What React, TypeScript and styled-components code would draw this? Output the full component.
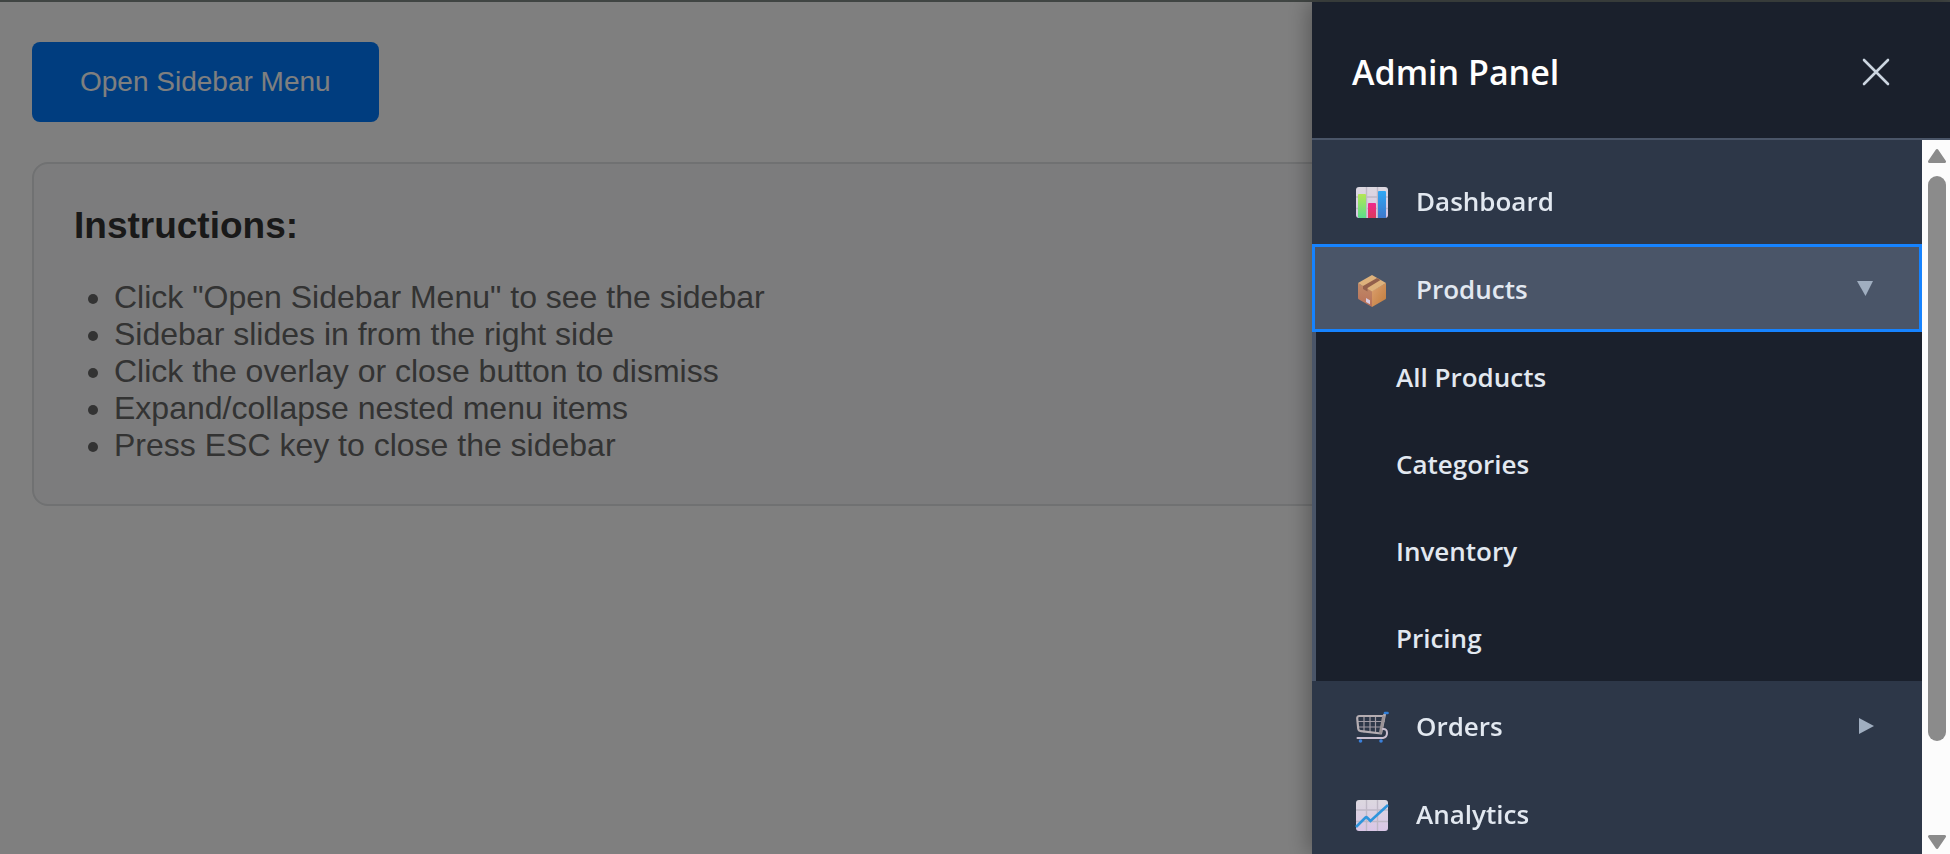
import React, { useEffect, useState } from "react";
import styled, { createGlobalStyle, css } from "styled-components";

const STRIP = 2;

const GlobalStyle = createGlobalStyle`
  *, *::before, *::after { box-sizing: border-box; }
  body {
    margin: 0;
    background: #ffffff;
    font-family: "Liberation Sans", Arial, sans-serif;
  }
`;

const TopStrip = styled.div`
  height: ${STRIP}px;
  background: #404543;
`;

const Page = styled.main`
  padding: 40px 32px;
`;

const OpenButton = styled.button`
  display: block;
  height: 80px;
  padding: 0 48px;
  border: 0;
  border-radius: 8px;
  background: #007bff;
  color: #ffffff;
  font-family: inherit;
  font-size: 28px;
  cursor: pointer;
`;

const Card = styled.section`
  margin-top: 40px;
  padding: 40px;
  border: 2px solid #e0e2e4;
  border-radius: 16px;
  background: #f8f9fa;
`;

const CardTitle = styled.h3`
  margin: 0 0 32px;
  color: #333333;
  font-size: 37px;
  line-height: 43px;
`;

const Steps = styled.ul`
  margin: 0;
  padding-left: 40px;
  color: #666666;
  font-size: 32px;
  line-height: 37px;
`;

const Overlay = styled.div`
  position: fixed;
  inset: ${STRIP}px 0 0;
  background: rgba(0, 0, 0, 0.5);
`;

const Sidebar = styled.aside`
  position: fixed;
  top: ${STRIP}px;
  right: 0;
  bottom: 0;
  display: flex;
  flex-direction: column;
  width: 638px;
  max-width: 100%;
  background: #2d3748;
  box-shadow: -4px 0 20px rgba(0, 0, 0, 0.3);
  font-family: "Open Sans", "Noto Sans", sans-serif;
`;

const SidebarHeader = styled.header`
  display: flex;
  align-items: center;
  justify-content: space-between;
  height: 138px;
  flex: none;
  padding: 0 40px;
  border-bottom: 2px solid #4a5568;
  background: #1a202c;
`;

const SidebarTitle = styled.h2`
  margin: 0;
  padding-top: 4px;
  color: #ffffff;
  font-size: 34px;
  font-weight: 600;
  line-height: 48px;
`;

const CloseButton = styled.button`
  display: grid;
  place-items: center;
  width: 68px;
  height: 72px;
  padding: 0;
  border: 0;
  background: none;
  color: #cbd5e0;
  cursor: pointer;
`;

const SidebarBody = styled.div`
  display: flex;
  flex: 1;
  min-height: 0;
`;

const Menu = styled.nav`
  flex: 1;
  min-width: 0;
  padding: 16px 0;
  overflow: hidden;
`;

const MenuList = styled.ul`
  margin: 0;
  padding: 0;
  list-style: none;
`;

const rowText = css`
  color: #e2e8f0;
  font-family: inherit;
  font-size: 26px;
  font-weight: 600;
  line-height: 36px;
  text-align: left;
`;

const MenuRow = styled.button<{ $active?: boolean }>`
  ${rowText}
  display: flex;
  align-items: center;
  gap: 24px;
  width: 100%;
  height: 88px;
  padding: 4px 40px 0;
  border: 0;
  background: ${(p) => (p.$active ? "#4a5568" : "transparent")};
  outline: ${(p) => (p.$active ? "3px solid #1683ff" : "none")};
  outline-offset: -3px;
  cursor: pointer;
`;

const RowLabel = styled.span`
  flex: 1;
  padding-bottom: 2px;
`;

const SubMenu = styled(MenuList)`
  padding-bottom: 1px;
  border-left: 4px solid #4a5568;
  background: #1a202c;
`;

const SubLink = styled.a`
  ${rowText}
  display: flex;
  align-items: center;
  height: 87px;
  padding: 2px 80px 0;
  text-decoration: none;
`;

const ScrollBar = styled.div`
  display: flex;
  flex-direction: column;
  width: 28px;
  padding: 0 4px 0 6px;
  background: #fcfcfc;
`;

const ScrollArrow = styled.svg`
  flex: none;
  width: 18px;
  height: 36px;
  fill: #8b8b8b;
  stroke: #8b8b8b;
  stroke-width: 3;
  stroke-linejoin: round;
`;

const ScrollTrack = styled.div`
  flex: 1;
`;

const ScrollThumb = styled.div`
  height: 88%;
  border-radius: 9px;
  background: #8b8b8b;
`;

const Icon = styled.svg`
  flex: none;
  width: 40px;
  height: 40px;
`;

const Arrow = styled.svg`
  flex: none;
  width: 26px;
  height: 24px;
  fill: #a0aec0;
`;

const ChartPaper = ({ id }: { id: string }) => (
  <>
    <defs>
      <linearGradient id={id} x1="0" y1="0" x2="0" y2="1">
        <stop offset="0" stopColor="#dcd8e0" />
        <stop offset="1" stopColor="#d9c6e6" />
      </linearGradient>
    </defs>
    <rect x="4" y="5" width="32" height="31" rx="3" fill={`url(#${id})`} />
    <path d="M14.5 5v31M25.5 5v31M4 15h32M4 26.5h32" stroke="#bfb8c6" strokeWidth="1.4" />
  </>
);

const BarsIcon = () => (
  <Icon viewBox="0 0 40 40" aria-hidden="true">
    <defs>
      <linearGradient id="green" x1="0" y1="0" x2="0" y2="1">
        <stop offset="0" stopColor="#b4e655" />
        <stop offset="1" stopColor="#5cdc8c" />
      </linearGradient>
      <linearGradient id="pink" x1="0" y1="0" x2="0" y2="1">
        <stop offset="0" stopColor="#f0288c" />
        <stop offset="1" stopColor="#d93a5c" />
      </linearGradient>
      <linearGradient id="blue" x1="0" y1="0" x2="0" y2="1">
        <stop offset="0" stopColor="#2fa8f5" />
        <stop offset="1" stopColor="#3f78cc" />
      </linearGradient>
    </defs>
    <ChartPaper id="paperBars" />
    <path d="M6 13a1 1 0 0 1 1-1h6a1 1 0 0 1 1 1v23H7l-1-1z" fill="url(#green)" />
    <path d="M16 22a1 1 0 0 1 1-1h6a1 1 0 0 1 1 1v14h-8z" fill="url(#pink)" />
    <path d="M26 10a1 1 0 0 1 1-1h6a1 1 0 0 1 1 1v26h-8z" fill="url(#blue)" />
  </Icon>
);

const BoxIcon = () => (
  <Icon viewBox="0 0 40 40" aria-hidden="true">
    <defs>
      <linearGradient id="boxLeft" x1="0" y1="0" x2="0" y2="1">
        <stop offset="0" stopColor="#c08a68" />
        <stop offset="1" stopColor="#b87058" />
      </linearGradient>
      <linearGradient id="boxRight" x1="0" y1="0" x2="1" y2="1">
        <stop offset="0" stopColor="#dca070" />
        <stop offset="1" stopColor="#c07c3c" />
      </linearGradient>
    </defs>
    <path d="M6 13l14 8v16L7 29.5q-1-.5-1-1.500z" fill="url(#boxLeft)" />
    <path d="M34 13l-14 8v16l13-7.500q1-.5 1-1.500z" fill="url(#boxRight)" />
    <path d="M20 5l14 8-14 8.500L6 13z" fill="#deb27c" />
    <path d="M25 8l3.500 2L15.500 18v3.500L11 19v-3z" fill="#93604c" />
    <path d="M14 28l4 2.300v4L14 32z" fill="#d9cbe0" />
  </Icon>
);

const CartIcon = () => (
  <Icon viewBox="0 0 40 40" aria-hidden="true" fill="none" strokeLinecap="round" strokeLinejoin="round">
    <path d="M12 9v16M18 9v16M23.5 9v16M6 14.500h26M6 20h24" stroke="#9f9aa3" strokeWidth="1.200" />
    <path d="M33 7l-1.500 2H7.500q-2.500 0-2.300 2.500l1 10q.3 2.500 2.800 2.700L29 26.500z" stroke="#b5adb2" strokeWidth="2.200" />
    <path d="M31.500 10L28.500 25.500" stroke="#9b9397" strokeWidth="3" />
    <path d="M31 22q4-.3 4 4t-4 5H5.500" stroke="#c9bfd0" strokeWidth="2" />
    <path d="M33 6h2.500" stroke="#2f7ed8" strokeWidth="2.600" />
    <circle cx="8.500" cy="34" r="1.800" fill="#3a7fd8" />
    <circle cx="29" cy="34" r="1.800" fill="#3a7fd8" />
  </Icon>
);

const TrendIcon = () => (
  <Icon viewBox="0 0 40 40" aria-hidden="true">
    <ChartPaper id="paperTrend" />
    <path d="M4 32L13.500 22.500q.8-.6 1.500 0L18.500 26 36 10" fill="none" stroke="#2f95dc" strokeWidth="2.600" />
  </Icon>
);

const DownArrow = () => (
  <Arrow viewBox="0 0 26 24" aria-hidden="true">
    <path d="M1 3h16L9.500 18z" />
  </Arrow>
);

const RightArrow = () => (
  <Arrow viewBox="0 0 26 24" aria-hidden="true">
    <path d="M3 3v16l15-8z" />
  </Arrow>
);

const steps = [
  'Click "Open Sidebar Menu" to see the sidebar',
  "Sidebar slides in from the right side",
  "Click the overlay or close button to dismiss",
  "Expand/collapse nested menu items",
  "Press ESC key to close the sidebar",
];

const productLinks = ["All Products", "Categories", "Inventory", "Pricing"];

export default function App() {
  const [open, setOpen] = useState(true);
  const [expanded, setExpanded] = useState(true);

  useEffect(() => {
    const onKey = (e: KeyboardEvent) => {
      if (e.key === "Escape") setOpen(false);
    };
    window.addEventListener("keydown", onKey);
    return () => window.removeEventListener("keydown", onKey);
  }, []);

  return (
    <>
      <GlobalStyle />
      <TopStrip />
      <Page>
        <OpenButton type="button" onClick={() => setOpen(true)}>
          Open Sidebar Menu
        </OpenButton>
        <Card>
          <CardTitle>Instructions:</CardTitle>
          <Steps>
            {steps.map((step) => (
              <li key={step}>{step}</li>
            ))}
          </Steps>
        </Card>
      </Page>
      {open && (
        <>
          <Overlay onClick={() => setOpen(false)} />
          <Sidebar aria-label="Admin Panel">
            <SidebarHeader>
              <SidebarTitle>Admin Panel</SidebarTitle>
              <CloseButton type="button" aria-label="Close" onClick={() => setOpen(false)}>
                <svg width="32" height="32" viewBox="0 0 32 32" aria-hidden="true">
                  <path d="M4 6l24 24M28 6L4 30" stroke="currentColor" strokeWidth="2.600" strokeLinecap="round" />
                </svg>
              </CloseButton>
            </SidebarHeader>
            <SidebarBody>
              <Menu>
                <MenuList>
                  <li>
                    <MenuRow type="button">
                      <BarsIcon />
                      <RowLabel>Dashboard</RowLabel>
                    </MenuRow>
                  </li>
                  <li>
                    <MenuRow
                      type="button"
                      $active
                      aria-expanded={expanded}
                      onClick={() => setExpanded(!expanded)}
                    >
                      <BoxIcon />
                      <RowLabel>Products</RowLabel>
                      {expanded ? <DownArrow /> : <RightArrow />}
                    </MenuRow>
                    {expanded && (
                      <SubMenu>
                        {productLinks.map((label) => (
                          <li key={label}>
                            <SubLink href="#">{label}</SubLink>
                          </li>
                        ))}
                      </SubMenu>
                    )}
                  </li>
                  <li>
                    <MenuRow type="button" aria-expanded={false}>
                      <CartIcon />
                      <RowLabel>Orders</RowLabel>
                      <RightArrow />
                    </MenuRow>
                  </li>
                  <li>
                    <MenuRow type="button">
                      <TrendIcon />
                      <RowLabel>Analytics</RowLabel>
                    </MenuRow>
                  </li>
                </MenuList>
              </Menu>
              <ScrollBar aria-hidden="true">
                <ScrollArrow viewBox="0 0 18 36">
                  <path d="M9 10.500L16.500 21.500H1.500z" />
                </ScrollArrow>
                <ScrollTrack>
                  <ScrollThumb />
                </ScrollTrack>
                <ScrollArrow viewBox="0 0 18 36">
                  <path d="M9 29.500L16.500 18.500H1.500z" />
                </ScrollArrow>
              </ScrollBar>
            </SidebarBody>
          </Sidebar>
        </>
      )}
    </>
  );
}
